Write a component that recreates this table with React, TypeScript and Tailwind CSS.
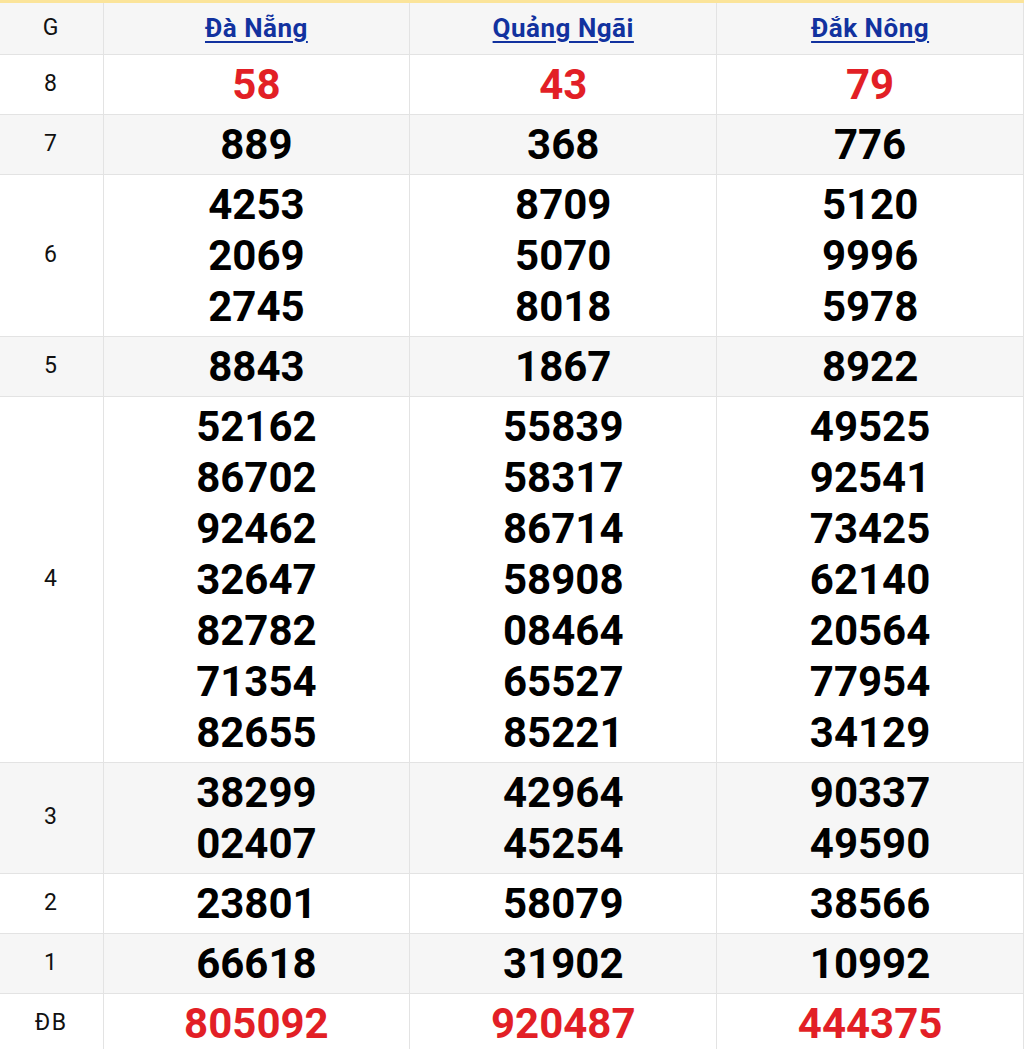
import React from "react";

interface Prize {
  label: string;
  values: string[][];
  red?: boolean;
}

const provinces = ["Đà Nẵng", "Quảng Ngãi", "Đắk Nông"];

const prizes: Prize[] = [
  { label: "8", values: [["58"], ["43"], ["79"]], red: true },
  { label: "7", values: [["889"], ["368"], ["776"]] },
  {
    label: "6",
    values: [
      ["4253", "2069", "2745"],
      ["8709", "5070", "8018"],
      ["5120", "9996", "5978"],
    ],
  },
  { label: "5", values: [["8843"], ["1867"], ["8922"]] },
  {
    label: "4",
    values: [
      ["52162", "86702", "92462", "32647", "82782", "71354", "82655"],
      ["55839", "58317", "86714", "58908", "08464", "65527", "85221"],
      ["49525", "92541", "73425", "62140", "20564", "77954", "34129"],
    ],
  },
  {
    label: "3",
    values: [
      ["38299", "02407"],
      ["42964", "45254"],
      ["90337", "49590"],
    ],
  },
  { label: "2", values: [["23801"], ["58079"], ["38566"]] },
  { label: "1", values: [["66618"], ["31902"], ["10992"]] },
  { label: "ĐB", values: [["805092"], ["920487"], ["444375"]], red: true },
];

const App: React.FC = () => {
  return (
    <div className="w-[1024px] h-[1049px] overflow-hidden bg-white font-['Roboto',sans-serif] border-t-[3px] border-[#fbe49a]">
      <table className="w-full border-collapse table-fixed">
        <colgroup>
          <col className="w-[103px]" />
          <col />
          <col />
          <col />
        </colgroup>
        <thead>
          <tr className="bg-[#f6f6f6] h-[51px]">
            <th className="border border-[#e3e3e3] border-t-0 border-l-0 text-[23px] font-normal text-[#111] tracking-[1.5px]">
              G
            </th>
            {provinces.map((p) => (
              <th
                key={p}
                className="border border-[#e3e3e3] border-t-0 text-[26px] font-bold text-[#12329f] tracking-[0.5px]"
              >
                <a href="#" className="underline underline-offset-[4px] decoration-[2px]">
                  {p}
                </a>
              </th>
            ))}
          </tr>
        </thead>
        <tbody>
          {prizes.map((prize, i) => (
            <tr key={prize.label} className={i % 2 === 1 ? "bg-[#f6f6f6]" : "bg-white"}>
              <td className="border border-[#e3e3e3] border-l-0 text-center text-[23px] text-[#111] tracking-[1.5px]">
                {prize.label}
              </td>
              {prize.values.map((col, j) => (
                <td
                  key={j}
                  className={`border border-[#e3e3e3] text-center py-1 text-[42px] leading-[51px] font-bold ${
                    prize.red ? "text-[#e21f26]" : "text-black"
                  }`}
                >
                  {col.map((n) => (
                    <div key={n}>{n}</div>
                  ))}
                </td>
              ))}
            </tr>
          ))}
        </tbody>
      </table>
    </div>
  );
};

export default App;
